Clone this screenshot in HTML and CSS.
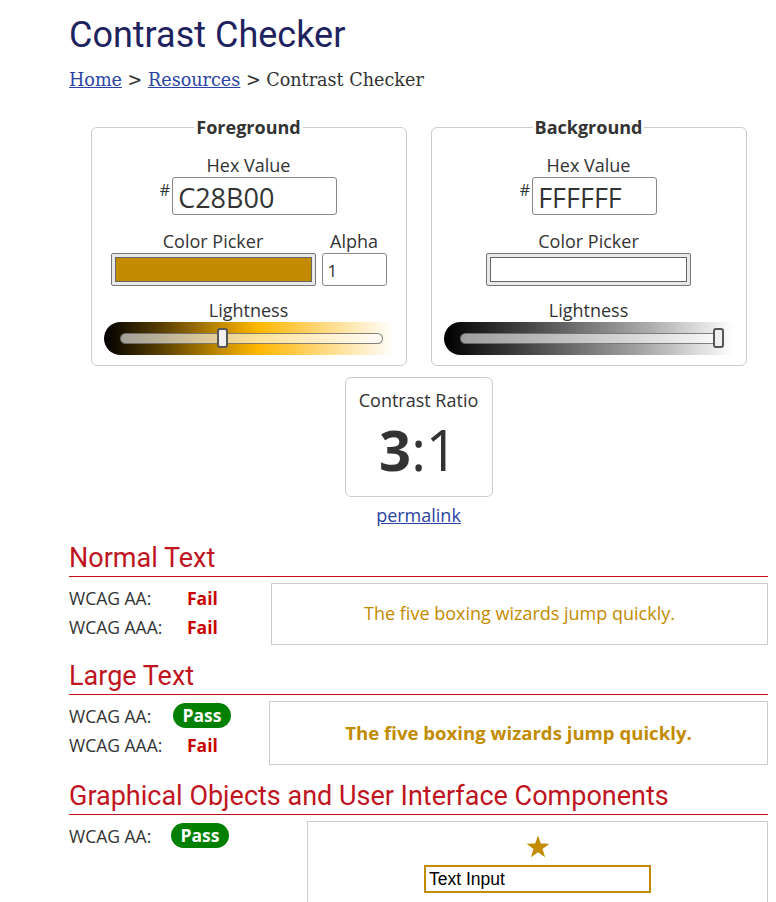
FILE: index.html
```html
<!DOCTYPE html>
<html lang="en">
<head>
<meta charset="utf-8">
<title>Contrast Checker</title>
<link rel="stylesheet" href="styles.css">
</head>
<body>
<main class="page">
  <h1 class="title">Contrast Checker</h1>
  <p class="crumbs"><a href="#">Home</a> &gt; <a href="#">Resources</a> &gt; Contrast Checker</p>

  <div class="pickers">
    <fieldset class="picker">
      <legend>Foreground</legend>
      <div class="label">Hex Value</div>
      <div class="hex-row">
        <span class="hash">#</span>
        <div class="hex-input hex-fg">C28B00</div>
      </div>
      <div class="pick-row">
        <div class="pick-col">
          <div class="label label-pick">Color Picker</div>
          <div class="swatch swatch-fg"><span class="swatch-inner inner-fg"></span></div>
        </div>
        <div class="pick-col">
          <div class="label label-pick">Alpha</div>
          <div class="alpha-input">1</div>
        </div>
      </div>
      <div class="label label-light">Lightness</div>
      <div class="slider slider-fg">
        <div class="track"><span class="thumb thumb-fg"></span></div>
      </div>
    </fieldset>

    <fieldset class="picker">
      <legend>Background</legend>
      <div class="label">Hex Value</div>
      <div class="hex-row">
        <span class="hash">#</span>
        <div class="hex-input hex-bg">FFFFFF</div>
      </div>
      <div class="pick-row">
        <div class="pick-col">
          <div class="label label-pick">Color Picker</div>
          <div class="swatch swatch-bg"><span class="swatch-inner inner-bg"></span></div>
        </div>
      </div>
      <div class="label label-light">Lightness</div>
      <div class="slider slider-bg">
        <div class="track"><span class="thumb thumb-bg"></span></div>
      </div>
    </fieldset>
  </div>

  <div class="ratio-wrap">
    <div class="ratio">
      <div class="ratio-label">Contrast Ratio</div>
      <div class="ratio-value"><b>3</b>:1</div>
    </div>
    <a class="permalink" href="#">permalink</a>
  </div>

  <section class="result">
    <h2 class="result-title">Normal Text</h2>
    <div class="result-body">
      <div class="checks checks-normal">
        <div class="check"><span class="check-name">WCAG AA:</span><span class="fail">Fail</span></div>
        <div class="check"><span class="check-name">WCAG AAA:</span><span class="fail">Fail</span></div>
      </div>
      <div class="sample sample-normal">The five boxing wizards jump quickly.</div>
    </div>
  </section>

  <section class="result">
    <h2 class="result-title">Large Text</h2>
    <div class="result-body">
      <div class="checks checks-large">
        <div class="check"><span class="check-name">WCAG AA:</span><span class="pass">Pass</span></div>
        <div class="check"><span class="check-name">WCAG AAA:</span><span class="fail">Fail</span></div>
      </div>
      <div class="sample sample-large">The five boxing wizards jump quickly.</div>
    </div>
  </section>

  <section class="result">
    <h2 class="result-title">Graphical Objects and User Interface Components</h2>
    <div class="result-body">
      <div class="checks checks-ui">
        <div class="check"><span class="check-name check-name-ui">WCAG AA:</span><span class="pass">Pass</span></div>
      </div>
      <div class="sample sample-ui">
        <svg class="star" width="24" height="23" viewBox="0 0 24 23" aria-hidden="true">
          <polygon points="12,0.5 14.8,8.6 23.4,8.7 16.5,13.9 19.1,22.2 12,17.2 4.9,22.2 7.5,13.9 0.6,8.7 9.2,8.6" fill="#C28B00"/>
        </svg>
        <div class="text-input">Text Input</div>
      </div>
    </div>
  </section>
</main>
</body>
</html>
```
FILE: styles.css
```css
* { box-sizing: border-box; }

body {
  margin: 0;
  font-family: "Open Sans", "Liberation Sans", sans-serif;
  color: #333;
  background: #fff;
}

.page {
  padding: 0 8px 0 69px;
}

.title {
  margin: 14px 0 0;
  font-family: Roboto, "Liberation Sans", sans-serif;
  font-weight: 400;
  font-size: 36px;
  line-height: 43px;
  color: #1e2360;
}

.crumbs {
  margin: 13px 0 0;
  font-family: "DejaVu Serif", "Liberation Serif", serif;
  font-size: 17.6px;
  line-height: 21px;
  color: #333;
}

.crumbs a, .permalink {
  color: #2a44a4;
  text-decoration: underline;
}

.pickers {
  display: flex;
  justify-content: center;
  gap: 24px;
  margin-top: 26px;
}

.picker {
  width: 316px;
  margin: 0;
  padding: 16px 10px 10px;
  border: 1px solid #ccc;
  border-radius: 6px;
  display: flex;
  flex-direction: column;
  align-items: center;
  min-inline-size: 0;
}

.picker legend {
  margin: 0 auto;
  padding: 0 2px;
  font-weight: 700;
  font-size: 18px;
  line-height: 21px;
  color: #333;
}

.label {
  font-size: 18px;
  line-height: 23px;
  color: #333;
  text-align: center;
}

.hex-row {
  display: flex;
  align-items: flex-start;
  gap: 2px;
}

.hash {
  font-size: 16px;
  line-height: 16px;
  margin-top: 5px;
}

.hex-input {
  height: 38px;
  border: 1px solid #888;
  border-radius: 3px;
  padding: 0 5px;
  font-size: 27px;
  line-height: 40px;
  color: #333;
}

.hex-fg { width: 165px; }
.hex-bg { width: 125px; }

.pick-row {
  display: flex;
  gap: 6px;
  margin-top: 15px;
}

.pick-col {
  display: flex;
  flex-direction: column;
  align-items: center;
}

.swatch {
  height: 33px;
  border: 1px solid #777;
  background: #e9e9e9;
  padding: 3px;
  border-radius: 2px;
  display: flex;
}

.swatch-fg { width: 205px; }
.swatch-bg { width: 205px; }

.swatch-inner {
  flex: 1;
  border: 1px solid #666;
}

.inner-fg { background: #C28B00; }
.inner-bg { background: #fff; }

.alpha-input {
  width: 65px;
  height: 33px;
  border: 1px solid #888;
  border-radius: 3px;
  padding: 0 5px;
  font-size: 17px;
  line-height: 33px;
  color: #333;
}

.label-light {
  margin-top: 13px;
}

.slider {
  width: 290px;
  height: 33px;
  border-radius: 17px 0 0 17px;
  padding: 11px 11px 0 16px;
}

.slider-fg {
  background: linear-gradient(to right, #000 0%, #5a4000 20%, #c28b00 40%, #ffb700 53%, #ffd36b 72%, #fff 100%);
}

.slider-bg {
  background: linear-gradient(to right, #000 0%, #555 35%, #aaa 70%, #fff 100%);
}

.track {
  position: relative;
  height: 11px;
  border-radius: 6px;
  background: rgba(255, 255, 255, 0.6);
  border: 1px solid rgba(90, 90, 90, 0.75);
}

.thumb {
  position: absolute;
  top: -6px;
  width: 11px;
  height: 20px;
  border: 2px solid #555;
  border-radius: 3px;
  background: #f0f0f0;
}

.thumb-fg { left: 96px; }
.thumb-bg { left: 252px; }

.ratio-wrap {
  display: flex;
  flex-direction: column;
  align-items: center;
  margin-top: 11px;
}

.ratio {
  width: 148px;
  border: 1px solid #ccc;
  border-radius: 6px;
  padding: 11px 0 19px;
  text-align: center;
}

.ratio-label {
  font-size: 18px;
  line-height: 23px;
}

.ratio-value {
  margin-top: 9px;
  font-size: 56px;
  line-height: 56px;
  color: #333;
}

.ratio-value b { font-weight: 700; }

.permalink {
  margin-top: 7px;
  font-size: 18px;
  line-height: 23px;
}

.result {
  margin-top: 16px;
}

.result-title {
  margin: 0;
  padding-bottom: 3px;
  border-bottom: 1px solid #c8101c;
  font-family: Roboto, "Liberation Sans", sans-serif;
  font-weight: 400;
  font-size: 27px;
  line-height: 30px;
  color: #c0151f;
}

.result-body {
  display: flex;
  align-items: flex-start;
  margin-top: 6px;
}

.checks { flex: none; }
.checks-normal { width: 202px; }
.checks-large { width: 200px; }
.checks-ui { width: 238px; }

.check {
  display: flex;
  align-items: center;
  height: 29px;
  font-size: 17.5px;
}

.check-name {
  width: 104px;
  color: #333;
}

.check-name-ui { width: 102px; }

.fail {
  padding-left: 14px;
  font-weight: 700;
  font-size: 17.5px;
  color: #c80000;
}

.pass {
  display: inline-block;
  width: 58px;
  height: 25px;
  border-radius: 13px;
  background: #008000;
  color: #fff;
  font-weight: 700;
  font-size: 17.5px;
  line-height: 25px;
  text-align: center;
}

.sample {
  flex: 1;
  border: 1px solid #ccc;
  text-align: center;
  color: #C28B00;
}

.sample-normal {
  padding: 18px 10px 19px;
  font-size: 18px;
  line-height: 23px;
}

.sample-large {
  padding: 18px 10px 19px;
  font-size: 18.6px;
  line-height: 25px;
  font-weight: 700;
}

.sample-ui {
  height: 110px;
  padding-top: 13px;
  display: flex;
  flex-direction: column;
  align-items: center;
}

.star { display: block; }

.text-input {
  margin-top: 7px;
  width: 227px;
  height: 28px;
  border: 2px solid #C28B00;
  padding: 0 3px;
  font-family: "Liberation Sans", Arial, sans-serif;
  font-size: 17.5px;
  line-height: 24px;
  color: #000;
  text-align: left;
}
```
